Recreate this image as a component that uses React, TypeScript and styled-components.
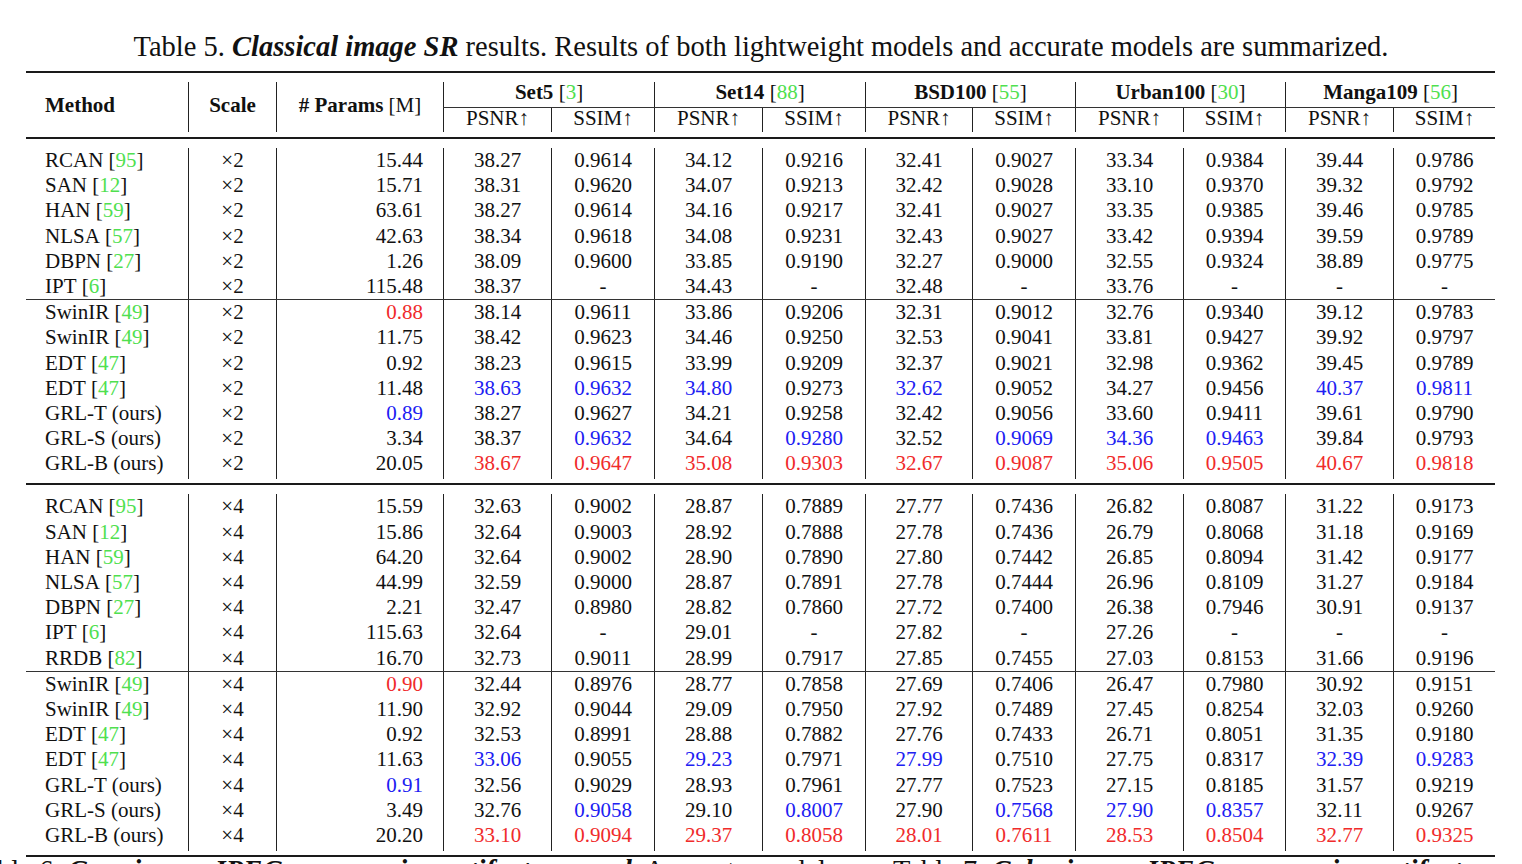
import React from "react";
import styled, { createGlobalStyle } from "styled-components";

const GlobalStyle = createGlobalStyle`
  html, body { margin: 0; padding: 0; background: #fff; }
  body {
    font-family: "Liberation Serif", "Times New Roman", "DejaVu Serif", serif;
    color: #111;
    width: 1522px;
    height: 864px;
    overflow: hidden;
  }
`;

const COLS = "162px 88px 167px 108px 103px 108px 103px 107px 103px 108px 102px 108px 102px";

const RED = "#f02b2b";
const BLUE = "#2020f2";
const GREEN = "#4fe04f";

const Page = styled.div`
  display: flex;
  flex-direction: column;
  padding-top: 32px;
`;

const Caption = styled.div`
  font-size: 28.5px;
  line-height: 30px;
  text-align: center;
  white-space: nowrap;
  margin-bottom: 9px;
`;

const BoldItalic = styled.span`
  font-weight: bold;
  font-style: italic;
`;

const TableBox = styled.div`
  margin-left: 26px;
  width: 1469px;
  display: flex;
  flex-direction: column;
`;

const Rule = styled.div<{ $thick?: boolean }>`
  height: ${(p) => (p.$thick ? "2px" : "1px")};
  background: ${(p) => (p.$thick ? "#1a1a1a" : "#333")};
`;

const Spacer = styled.div<{ $h: number }>`
  height: ${(p) => p.$h}px;
`;

const HeadGrid = styled.div`
  display: grid;
  grid-template-columns: ${COLS};
  grid-template-rows: 25px 1px 24px;
  font-size: 21px;
`;

const HeadCell = styled.div<{ $col: string; $row: string; $align?: string; $divider?: boolean }>`
  grid-column: ${(p) => p.$col};
  grid-row: ${(p) => p.$row};
  display: flex;
  align-items: center;
  justify-content: ${(p) => p.$align || "center"};
  padding-left: ${(p) => (p.$align === "flex-start" ? "19px" : "0")};
  padding-bottom: 4px;
  border-left: ${(p) => (p.$divider ? "1px solid #222" : "none")};
  white-space: nowrap;
`;

const HeadRule = styled.div`
  grid-column: 4 / 14;
  grid-row: 2;
  background: #333;
`;

const Bold = styled.b`
  font-weight: bold;
`;

const Cite = styled.span`
  color: ${GREEN};
`;

const Row = styled.div`
  display: grid;
  grid-template-columns: ${COLS};
  height: 25.2px;
  font-size: 21px;
`;

const Cell = styled.div<{ $align: "left" | "center" | "right"; $divider?: boolean; $tone?: string }>`
  display: flex;
  align-items: center;
  justify-content: ${(p) =>
    p.$align === "left" ? "flex-start" : p.$align === "right" ? "flex-end" : "center"};
  padding-left: ${(p) => (p.$align === "left" ? "19px" : "0")};
  padding-right: ${(p) => (p.$align === "right" ? "20px" : "0")};
  padding-bottom: 3px;
  border-left: ${(p) => (p.$divider ? "1px solid #222" : "none")};
  color: ${(p) => p.$tone || "#111"};
  white-space: nowrap;
`;

const BottomLine = styled.div`
  display: flex;
  margin-top: 0px;
  font-size: 28.5px;
  line-height: 28px;
  white-space: nowrap;
  overflow: hidden;
  width: 1522px;
`;

const LeftCap = styled.div`
  flex: 0 0 893px;
  overflow: hidden;
`;

const LeftCapText = styled.div`
  margin-left: -31px;
`;

const RightCap = styled.div`
  flex: 0 0 auto;
`;

type Group = string[];

const datasets = [
  ["Set5", "3"],
  ["Set14", "88"],
  ["BSD100", "55"],
  ["Urban100", "30"],
  ["Manga109", "56"],
];

// format: name|cite|scale|params|10 values ; suffix * = red, ^ = blue
const groups: Group[] = [
  [
    "RCAN|95|2|15.44|38.27 0.9614 34.12 0.9216 32.41 0.9027 33.34 0.9384 39.44 0.9786",
    "SAN|12|2|15.71|38.31 0.9620 34.07 0.9213 32.42 0.9028 33.10 0.9370 39.32 0.9792",
    "HAN|59|2|63.61|38.27 0.9614 34.16 0.9217 32.41 0.9027 33.35 0.9385 39.46 0.9785",
    "NLSA|57|2|42.63|38.34 0.9618 34.08 0.9231 32.43 0.9027 33.42 0.9394 39.59 0.9789",
    "DBPN|27|2|1.26|38.09 0.9600 33.85 0.9190 32.27 0.9000 32.55 0.9324 38.89 0.9775",
    "IPT|6|2|115.48|38.37 - 34.43 - 32.48 - 33.76 - - -",
  ],
  [
    "SwinIR|49|2|0.88*|38.14 0.9611 33.86 0.9206 32.31 0.9012 32.76 0.9340 39.12 0.9783",
    "SwinIR|49|2|11.75|38.42 0.9623 34.46 0.9250 32.53 0.9041 33.81 0.9427 39.92 0.9797",
    "EDT|47|2|0.92|38.23 0.9615 33.99 0.9209 32.37 0.9021 32.98 0.9362 39.45 0.9789",
    "EDT|47|2|11.48|38.63^ 0.9632^ 34.80^ 0.9273 32.62^ 0.9052 34.27 0.9456 40.37^ 0.9811^",
    "GRL-T (ours)||2|0.89^|38.27 0.9627 34.21 0.9258 32.42 0.9056 33.60 0.9411 39.61 0.9790",
    "GRL-S (ours)||2|3.34|38.37 0.9632^ 34.64 0.9280^ 32.52 0.9069^ 34.36^ 0.9463^ 39.84 0.9793",
    "GRL-B (ours)||2|20.05|38.67* 0.9647* 35.08* 0.9303* 32.67* 0.9087* 35.06* 0.9505* 40.67* 0.9818*",
  ],
  [
    "RCAN|95|4|15.59|32.63 0.9002 28.87 0.7889 27.77 0.7436 26.82 0.8087 31.22 0.9173",
    "SAN|12|4|15.86|32.64 0.9003 28.92 0.7888 27.78 0.7436 26.79 0.8068 31.18 0.9169",
    "HAN|59|4|64.20|32.64 0.9002 28.90 0.7890 27.80 0.7442 26.85 0.8094 31.42 0.9177",
    "NLSA|57|4|44.99|32.59 0.9000 28.87 0.7891 27.78 0.7444 26.96 0.8109 31.27 0.9184",
    "DBPN|27|4|2.21|32.47 0.8980 28.82 0.7860 27.72 0.7400 26.38 0.7946 30.91 0.9137",
    "IPT|6|4|115.63|32.64 - 29.01 - 27.82 - 27.26 - - -",
    "RRDB|82|4|16.70|32.73 0.9011 28.99 0.7917 27.85 0.7455 27.03 0.8153 31.66 0.9196",
  ],
  [
    "SwinIR|49|4|0.90*|32.44 0.8976 28.77 0.7858 27.69 0.7406 26.47 0.7980 30.92 0.9151",
    "SwinIR|49|4|11.90|32.92 0.9044 29.09 0.7950 27.92 0.7489 27.45 0.8254 32.03 0.9260",
    "EDT|47|4|0.92|32.53 0.8991 28.88 0.7882 27.76 0.7433 26.71 0.8051 31.35 0.9180",
    "EDT|47|4|11.63|33.06^ 0.9055 29.23^ 0.7971 27.99^ 0.7510 27.75 0.8317 32.39^ 0.9283^",
    "GRL-T (ours)||4|0.91^|32.56 0.9029 28.93 0.7961 27.77 0.7523 27.15 0.8185 31.57 0.9219",
    "GRL-S (ours)||4|3.49|32.76 0.9058^ 29.10 0.8007^ 27.90 0.7568^ 27.90^ 0.8357^ 32.11 0.9267",
    "GRL-B (ours)||4|20.20|33.10* 0.9094* 29.37* 0.8058* 28.01* 0.7611* 28.53* 0.8504* 32.77* 0.9325*",
  ],
];

function parseVal(v: string): { text: string; tone?: string } {
  if (v.endsWith("*")) return { text: v.slice(0, -1), tone: RED };
  if (v.endsWith("^")) return { text: v.slice(0, -1), tone: BLUE };
  return { text: v };
}

function DataRow({ line }: { line: string }) {
  const [name, cite, scale, params, vals] = line.split("|");
  const p = parseVal(params);
  const values = vals.split(" ").map(parseVal);
  return (
    <Row>
      <Cell $align="left">
        {name}
        {cite && (
          <>
            &nbsp;[<Cite>{cite}</Cite>]
          </>
        )}
      </Cell>
      <Cell $align="center" $divider>
        ×{scale}
      </Cell>
      <Cell $align="right" $divider $tone={p.tone}>
        {p.text}
      </Cell>
      {values.map((v, i) => (
        <Cell key={i} $align="center" $divider $tone={v.tone}>
          {v.text}
        </Cell>
      ))}
    </Row>
  );
}

function Header() {
  return (
    <HeadGrid>
      <HeadCell $col="1" $row="1 / 4" $align="flex-start">
        <Bold>Method</Bold>
      </HeadCell>
      <HeadCell $col="2" $row="1 / 4" $divider>
        <Bold>Scale</Bold>
      </HeadCell>
      <HeadCell $col="3" $row="1 / 4" $divider>
        <Bold># Params</Bold>&nbsp;[M]
      </HeadCell>
      {datasets.map(([n, c], i) => (
        <HeadCell key={n} $col={`${4 + i * 2} / span 2`} $row="1" $divider>
          <Bold>{n}</Bold>&nbsp;[<Cite>{c}</Cite>]
        </HeadCell>
      ))}
      <HeadRule />
      {datasets.map(([n], i) => (
        <React.Fragment key={n}>
          <HeadCell $col={`${4 + i * 2}`} $row="3" $divider>
            PSNR↑
          </HeadCell>
          <HeadCell $col={`${5 + i * 2}`} $row="3" $divider>
            SSIM↑
          </HeadCell>
        </React.Fragment>
      ))}
    </HeadGrid>
  );
}

export default function App() {
  return (
    <>
      <GlobalStyle />
      <Page>
        <Caption>
          Table 5. <BoldItalic>Classical image SR</BoldItalic> results. Results of both lightweight
          models and accurate models are summarized.
        </Caption>
        <TableBox>
          <Rule $thick />
          <Spacer $h={9} />
          <Header />
          <Spacer $h={5} />
          <Rule $thick />
          <Spacer $h={9} />
          {groups[0].map((l, i) => (
            <DataRow key={i} line={l} />
          ))}
          <Rule />
          {groups[1].map((l, i) => (
            <DataRow key={i} line={l} />
          ))}
          <Spacer $h={7} />
          <Rule $thick />
          <Spacer $h={9} />
          {groups[2].map((l, i) => (
            <DataRow key={i} line={l} />
          ))}
          <Rule />
          {groups[3].map((l, i) => (
            <DataRow key={i} line={l} />
          ))}
          <Spacer $h={7} />
          <Rule $thick />
        </TableBox>
        <BottomLine>
          <LeftCap>
            <LeftCapText>
              Table 6. <BoldItalic>Gray image JPEG compression artifact removal.</BoldItalic>{" "}
              Accurate models.
            </LeftCapText>
          </LeftCap>
          <RightCap>
            Table 7. <BoldItalic>Color image JPEG compression artifact removal</BoldItalic> results.
          </RightCap>
        </BottomLine>
      </Page>
    </>
  );
}
